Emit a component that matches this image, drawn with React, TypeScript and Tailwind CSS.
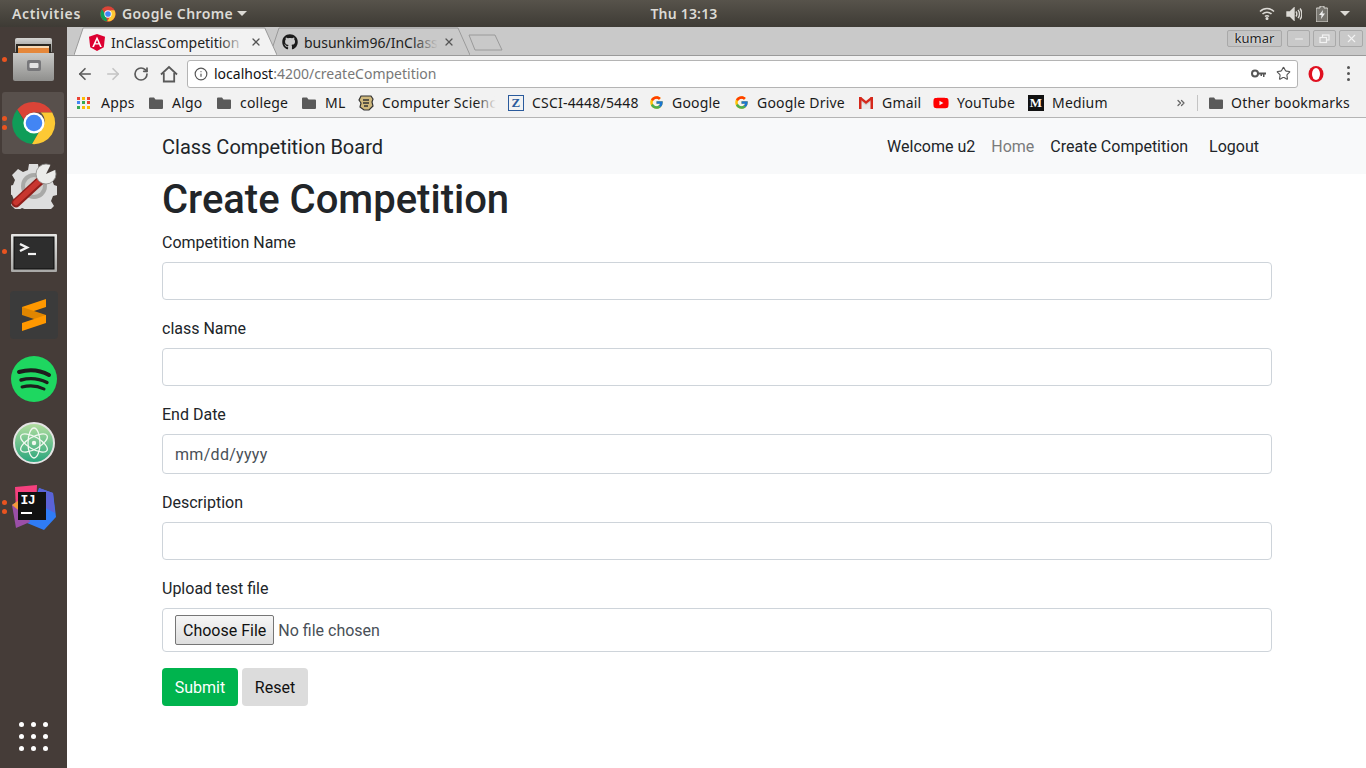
import { FaGithub, FaYoutube } from "react-icons/fa";
import { FcGoogle } from "react-icons/fc";
import { ArrowLeft, ArrowRight, RotateCw, Info, Star, X, Minus, ChevronsRight } from "lucide-react";

const uiFont = "font-['Noto_Sans','Open_Sans',sans-serif]";

function Folder() {
  return (
    <svg width="16" height="14" viewBox="0 0 16 14">
      <path d="M1 2.5a1 1 0 0 1 1-1h4l1.5 2H14a1 1 0 0 1 1 1V12a1 1 0 0 1-1 1H2a1 1 0 0 1-1-1z" fill="#5a5a5a" />
    </svg>
  );
}

function AppsGrid() {
  const colors = ["#ea4335", "#fbbc05", "#ea4335", "#4285f4", "#34a853", "#ea4335", "#34a853", "#fbbc05", "#fbbc05"];
  return (
    <div className="grid grid-cols-3 gap-[1.5px] w-[13px]">
      {colors.map((c, i) => (
        <span key={i} className="w-[3px] h-[3px]" style={{ backgroundColor: c }} />
      ))}
    </div>
  );
}

function CuIcon() {
  return (
    <svg width="16" height="16" viewBox="0 0 16 16">
      <path d="M3 1h10l2 3-1 3 1 4-4 4H6l-4-3 1-4-2-3z" fill="#cfb87c" stroke="#333" strokeWidth="1.2" />
      <path d="M5 5h6M5 8h6M6 11h4" stroke="#333" strokeWidth="1.4" />
    </svg>
  );
}

function GmailIcon() {
  return (
    <svg width="16" height="14" viewBox="0 0 16 14">
      <path d="M1 1v12h14V1l-7 5.5z" fill="#e8e8e8" />
      <path d="M1 1l7 5.5L15 1v3L8 9.5 1 4z" fill="#d0d0d0" />
      <path d="M1 1h2.5v12H1zM12.5 1H15v12h-2.5z" fill="#d5281b" />
      <path d="M1 1h2l5 4 5-4h2v1.5L8 8 1 2.5z" fill="#d5281b" />
    </svg>
  );
}

const bookmarks = [
  { label: "Apps", icon: <AppsGrid />, gap: "gap-[11px]", width: "w-[71px]" },
  { label: "Algo", icon: <Folder />, gap: "gap-[8px]", width: "w-[68px]" },
  { label: "college", icon: <Folder />, gap: "gap-[8px]", width: "w-[85px]" },
  { label: "ML", icon: <Folder />, gap: "gap-[8px]", width: "w-[57px]" },
];

const bookmarks2 = [
  {
    label: "CSCI-4448/5448",
    icon: (
      <span className="flex items-center justify-center w-[16px] h-[16px] border border-[#2a5a9c] text-[#2a5a9c] text-[13px] font-bold font-['Liberation_Serif',serif] leading-none">
        Z
      </span>
    ),
    width: "w-[140px]",
  },
  { label: "Google", icon: <FcGoogle size={15} />, width: "w-[85px]" },
  { label: "Google Drive", icon: <FcGoogle size={15} />, width: "w-[125px]" },
  { label: "Gmail", icon: <GmailIcon />, width: "w-[75px]" },
  { label: "YouTube", icon: <FaYoutube size={16} color="#f00" />, width: "w-[95px]" },
  {
    label: "Medium",
    icon: (
      <span className="flex items-center justify-center w-[16px] h-[16px] bg-[#111] text-white text-[13px] font-bold font-['Liberation_Serif',serif] leading-none">
        M
      </span>
    ),
    width: "w-[90px]",
  },
];

function FileDrawerIcon() {
  return (
    <svg width="41" height="43" viewBox="0 0 41 43">
      <defs>
        <linearGradient id="cab" x1="0" y1="0" x2="0" y2="1">
          <stop offset="0" stopColor="#c9c9c7" />
          <stop offset="1" stopColor="#8f8f8d" />
        </linearGradient>
        <linearGradient id="lid" x1="0" y1="0" x2="0" y2="1">
          <stop offset="0" stopColor="#d5d5d3" />
          <stop offset="1" stopColor="#8a8a88" />
        </linearGradient>
      </defs>
      <path d="M2 2a2 2 0 0 1 2-2h33a2 2 0 0 1 2 2v12H2z" fill="url(#lid)" />
      <rect x="3" y="6" width="35" height="9" fill="#2b2822" />
      <rect x="5" y="8" width="31" height="2" fill="#f6d9b4" />
      <rect x="5" y="10" width="31" height="5" fill="#e5873a" />
      <path d="M0 15h41v26a2 2 0 0 1-2 2H2a2 2 0 0 1-2-2z" fill="url(#cab)" />
      <rect x="14" y="22" width="14" height="11" rx="2" fill="#77777a" />
      <rect x="16.500" y="25" width="9" height="5" rx="1" fill="#e4e4e4" />
    </svg>
  );
}

function ChromeIcon() {
  return (
    <svg width="46" height="46" viewBox="0 0 48 48">
      <path d="M24 2a22 22 0 0 1 19.05 11H24a11 11 0 0 0-10.4 7.4L6.5 9.8A22 22 0 0 1 24 2z" fill="#db4437" />
      <path d="M6.5 9.8l9.6 16.6A9 9 0 0 0 29 33l-6.8 13A22 22 0 0 1 6.5 9.8z" fill="#0f9d58" />
      <path d="M43.05 13A22 22 0 0 1 22 46l9.5-16.4A11 11 0 0 0 31 13z" fill="#fcc934" />
      <circle cx="24" cy="24" r="11" fill="#fff" />
      <circle cx="24" cy="24" r="8.6" fill="#4285f4" />
    </svg>
  );
}

function SettingsIcon() {
  return (
    <svg width="46" height="46" viewBox="0 0 46 46">
      <path
        d="M18 1h9l1 6 5 2 5-3 6 6-3 5 2 5 3 1v9l-4 1-2 5 3 5-6 6-5-3-5 2-1 3h-9l-1-4-5-2-5 3-6-6 3-5-2-5-3-1v-8l4-1 2-5-3-5 6-6 5 3 5-2z"
        fill="#dedede"
      />
      <circle cx="23" cy="23" r="13" fill="#a9a9a7" />
      <circle cx="23" cy="23" r="9" fill="#cfcfcd" />
      <path d="M5 40L31 16" stroke="#8f1f1b" strokeWidth="9" strokeLinecap="round" />
      <path d="M5 39.500L30 16.500" stroke="#c8362f" strokeWidth="5.500" strokeLinecap="round" />
      <circle cx="35" cy="11" r="10" fill="#ececea" stroke="#8a8a88" strokeWidth="0.800" />
      <path d="M35 11L41 -1L48 5z" fill="#453c38" />
    </svg>
  );
}

function TerminalIcon() {
  return (
    <svg width="46" height="38" viewBox="0 0 46 38">
      <defs>
        <linearGradient id="term" x1="0" y1="0" x2="0" y2="1">
          <stop offset="0" stopColor="#e6e6e4" />
          <stop offset="1" stopColor="#a8a8a6" />
        </linearGradient>
      </defs>
      <rect x="0" y="0" width="46" height="38" rx="1" fill="url(#term)" />
      <rect x="3" y="3" width="40" height="32" fill="#2d2d2d" stroke="#0c0c0c" />
      <path d="M9 10l7 3.500-7 3.500" stroke="#f2f2f2" strokeWidth="2.500" fill="none" />
      <path d="M17 20h8" stroke="#f2f2f2" strokeWidth="2.200" />
    </svg>
  );
}

function SublimeIcon() {
  return (
    <div className="w-[48px] h-[48px] rounded-[4px] bg-[#3b3b3b] flex items-center justify-center">
      <svg width="26" height="32" viewBox="0 0 26 32">
        <path d="M25 0v8L1 16V8z" fill="#ff9800" />
        <path d="M1 8l24 8v8L1 16z" fill="#e08600" />
        <path d="M25 16v8L1 32v-8z" fill="#ff9800" />
      </svg>
    </div>
  );
}

function SpotifyIcon() {
  return (
    <svg width="46" height="46" viewBox="0 0 46 46">
      <circle cx="23" cy="23" r="23" fill="#1ed760" />
      <path d="M8 16c10-3 21-2 30 3" stroke="#1d1d1d" strokeWidth="4" strokeLinecap="round" fill="none" />
      <path d="M10 24c9-2.5 18-1.500 26 2.500" stroke="#1d1d1d" strokeWidth="3.400" strokeLinecap="round" fill="none" />
      <path d="M11 31c8-2 15-1.500 22 2" stroke="#1d1d1d" strokeWidth="3" strokeLinecap="round" fill="none" />
    </svg>
  );
}

function AtomIcon() {
  return (
    <svg width="42" height="42" viewBox="0 0 42 42">
      <defs>
        <linearGradient id="atom" x1="0" y1="0" x2="0" y2="1">
          <stop offset="0" stopColor="#b5dfa0" />
          <stop offset="1" stopColor="#27a57c" />
        </linearGradient>
      </defs>
      <circle cx="21" cy="21" r="20" fill="url(#atom)" stroke="#e4e4e4" strokeWidth="2" />
      <g fill="none" stroke="#f1f8f0" strokeWidth="1.300">
        <ellipse cx="21" cy="21" rx="15" ry="6" transform="rotate(30 21 21)" />
        <ellipse cx="21" cy="21" rx="15" ry="6" transform="rotate(-30 21 21)" />
        <ellipse cx="21" cy="21" rx="15" ry="6" transform="rotate(90 21 21)" />
      </g>
      <circle cx="21" cy="21" r="2.200" fill="#f1f8f0" />
    </svg>
  );
}

function IntellijIcon() {
  return (
    <div className="relative w-[44px] h-[46px]">
      <svg width="44" height="46" viewBox="0 0 44 46" className="absolute inset-0">
        <path d="M27 4l14 5 3 24-12 13-17-7z" fill="#2f7cf6" />
        <path d="M27 4l14 5 2 20-17-9z" fill="#5b62d6" />
        <path d="M3 3l22-2-1 22-20 4z" fill="#f5407e" />
        <path d="M0 21l10-7 8 24-14 6z" fill="#9b4fa8" />
        <path d="M0 21l7-5 3 13z" fill="#f39a3a" />
      </svg>
      <div className="absolute left-[6px] top-[8px] w-[28px] h-[28px] bg-[#111] px-[3px] pt-[1px]">
        <div className="text-white text-[13px] leading-[15px] font-bold font-['Liberation_Mono',monospace] tracking-[-0.5px]">IJ</div>
        <div className="w-[11px] h-[2px] bg-white mt-[4px]" />
      </div>
    </div>
  );
}

const dockItems = [
  { icon: <FileDrawerIcon />, dots: 1, offset: "" },
  { icon: <ChromeIcon />, dots: 2, active: true, offset: "" },
  { icon: <SettingsIcon />, dots: 0, offset: "-mt-[3px]" },
  { icon: <TerminalIcon />, dots: 1, offset: "mt-[4px]" },
  { icon: <SublimeIcon />, dots: 0, offset: "" },
  { icon: <SpotifyIcon />, dots: 0, offset: "" },
  { icon: <AtomIcon />, dots: 0, offset: "" },
  { icon: <IntellijIcon />, dots: 2, offset: "" },
];

function Dock() {
  return (
    <aside className="w-[67px] shrink-0 bg-[#453c38] flex flex-col items-center pb-[17px]">
      {dockItems.map((item, i) => (
        <div key={i} className="relative w-[67px] h-[64px] flex items-center justify-center">
          {item.active && <div className="absolute left-[2px] top-[1px] w-[62px] h-[62px] rounded-[3px] bg-white/10" />}
          <div className={`relative ${item.offset}`}>{item.icon}</div>
          {item.dots > 0 && (
            <div className="absolute left-[2px] top-0 bottom-0 flex flex-col justify-center gap-[4px]">
              {Array.from({ length: item.dots }).map((_, d) => (
                <span key={d} className="block w-[5px] h-[5px] rounded-full bg-[#e95420]" />
              ))}
            </div>
          )}
        </div>
      ))}
      <div className="mt-auto grid grid-cols-3 gap-x-[7px] gap-y-[7px]">
        {Array.from({ length: 9 }).map((_, i) => (
          <span key={i} className="w-[5px] h-[5px] rounded-full bg-white" />
        ))}
      </div>
    </aside>
  );
}

function TopBar() {
  return (
    <header className={`h-[27px] shrink-0 bg-gradient-to-b from-[#57534b] to-[#3e3b35] flex items-center text-[#dcdad5] text-[14px] font-semibold ${uiFont}`}>
      <div className="w-[100px] pl-[12px] tracking-[0.65px]">Activities</div>
      <div className="flex items-center gap-[6px] w-[520px] tracking-[0.4px]">
        <svg width="16" height="16" viewBox="0 0 48 48">
          <circle cx="24" cy="24" r="23" fill="#db4437" />
          <path d="M6.500 9.800l9.600 16.600L22 46A22 22 0 0 1 6.500 9.800z" fill="#0f9d58" />
          <path d="M43 13A22 22 0 0 1 22 46l9.500-16.400L31 13z" fill="#fcc934" />
          <circle cx="24" cy="24" r="11" fill="#fff" />
          <circle cx="24" cy="24" r="8.500" fill="#4285f4" />
        </svg>
        <span>Google Chrome</span>
        <span className="-ml-[2px] w-0 h-0 border-x-[5px] border-x-transparent border-t-[5px] border-t-[#dcdad5]" />
      </div>
      <div className="w-[130px] -ml-[1px] text-center tracking-[0.2px]">Thu 13:13</div>
      <div className="ml-auto flex items-center gap-[12px] pr-[16px]">
        <svg width="16" height="13" viewBox="0 0 16 13" fill="none" stroke="#dcdad5" strokeWidth="1.500">
          <path d="M1 4.500c4-4 10-4 14 0M3.500 7c2.500-2.500 6.500-2.500 9 0M6 9.500c1-1 3-1 4 0" />
          <circle cx="8" cy="11.500" r="0.800" fill="#dcdad5" />
        </svg>
        <svg width="16" height="14" viewBox="0 0 16 14" fill="none" stroke="#dcdad5" strokeWidth="1.400" className="ml-[-1px]">
          <path d="M1 5h3l4-4v12l-4-4H1z" fill="#dcdad5" />
          <path d="M10 4.500c1 1.500 1 3.500 0 5M12 3c2 2 2 6 0 8M14 1.500c2.500 3 2.500 8 0 11" />
        </svg>
        <svg width="12" height="16" viewBox="0 0 12 16" className="ml-[2px]">
          <path d="M4 0h4v2h3a1 1 0 0 1 1 1v12a1 1 0 0 1-1 1H1a1 1 0 0 1-1-1V3a1 1 0 0 1 1-1h3z" fill="#77756f" stroke="#dcdad5" />
          <path d="M7 4L3 9h2.500L5 13l4-5.500H6.500z" fill="#eee" />
        </svg>
        <span className="w-0 h-0 border-x-[5px] border-x-transparent border-t-[5px] border-t-[#dcdad5]" />
      </div>
    </header>
  );
}

function Tab({ label, icon, active, width, pad }: { label: string; icon: React.ReactNode; active?: boolean; width: string; pad: string }) {
  return (
    <div className={`relative h-full ${width} -mr-[7px] ${active ? "z-10" : ""}`}>
      <svg className="absolute inset-0 w-full h-full" viewBox="0 0 200 28" preserveAspectRatio="none">
        <path
          d="M0 28 L9 1 H188 L200 28"
          fill={active ? "#f2f2f2" : "#c9c9c9"}
          stroke="#9a9a9a"
          strokeWidth="1"
          vectorEffect="non-scaling-stroke"
        />
      </svg>
      <div className={`relative flex items-center h-full ${pad} pr-[15px] pt-[2px] text-[14px] text-[#222] ${uiFont}`}>
        <span className="w-[16px] shrink-0 flex justify-center">{icon}</span>
        <div className="relative ml-[6px] flex-1 overflow-hidden whitespace-nowrap">
          {label}
          <span className={`absolute right-0 top-0 bottom-0 w-[26px] bg-gradient-to-r from-transparent ${active ? "to-[#f2f2f2]" : "to-[#c9c9c9]"}`} />
        </div>
        <X size={12} strokeWidth={2.5} className="ml-[5px] shrink-0 text-[#555]" />
      </div>
    </div>
  );
}

function TabStrip() {
  return (
    <div className="h-[29px] shrink-0 bg-[#c9c9c9] border-b border-[#9a9a9a] flex items-end pl-[7px] relative">
      <div className="flex h-[28px]">
        <Tab
          active
          width="w-[203px]"
          pad="pl-[15px]"
          label="InClassCompetition"
          icon={
            <svg width="16" height="17" viewBox="0 0 16 17">
              <path d="M8 0l8 2.800-1.200 10.400L8 17l-6.800-3.800L0 2.800z" fill="#dd0031" />
              <path d="M8 2.500L3.200 13h1.800l1-2.400h4l1 2.400h1.800zM8 6l1.400 3.200H6.600z" fill="#fff" />
            </svg>
          }
        />
        <Tab width="w-[200px]" pad="pl-[12px]" label="busunkim96/InClass" icon={<FaGithub size={16} color="#1b1b1b" />} />
      </div>
      <svg width="35" height="17" viewBox="0 0 35 17" className="ml-[5px] mb-[4px]">
        <path d="M1 1H27L34 16H7z" fill="#c9c9c9" stroke="#9a9a9a" />
      </svg>
      <div className="ml-auto mr-[3px] mb-[8px] self-end flex items-center text-[#444]">
        <div className={`w-[55px] h-[17px] bg-[#c4c4c4] border border-[#a9a9a9] rounded-[2px] flex items-center justify-center text-[13px] text-[#222] [text-shadow:0_0_2px_#fff] ${uiFont}`}>
          kumar
        </div>
        <div className="ml-[5px] w-[23px] h-[17px] border border-[#a9a9a9] rounded-[2px] flex items-center justify-center text-[#f2f2f2]">
          <Minus size={12} strokeWidth={2} />
        </div>
        <div className="ml-[3px] w-[23px] h-[17px] border border-[#a9a9a9] rounded-[2px] flex items-center justify-center">
          <svg width="11" height="10" viewBox="0 0 11 10" fill="none" stroke="#f2f2f2" strokeWidth="1.200">
            <rect x="3.500" y="1" width="6.500" height="5" />
            <rect x="1" y="3.500" width="6.500" height="5" fill="#c9c9c9" />
          </svg>
        </div>
        <div className="ml-[3px] w-[24px] h-[17px] border border-[#a9a9a9] rounded-[2px] flex items-center justify-center text-[#f2f2f2]">
          <X size={13} strokeWidth={2} />
        </div>
      </div>
    </div>
  );
}

function Toolbar() {
  return (
    <div className="h-[32px] shrink-0 bg-[#f2f2f2] flex items-center pl-[9px] pr-[16px] pt-[3px]">
      <ArrowLeft size={18} strokeWidth={2.200} className="text-[#5a5a5a]" />
      <ArrowRight size={18} strokeWidth={2.200} className="ml-[10px] text-[#c4c4c4]" />
      <RotateCw size={16} strokeWidth={2.500} className="ml-[11px] text-[#5a5a5a]" />
      <svg width="18" height="18" viewBox="0 0 18 18" fill="none" stroke="#5a5a5a" strokeWidth="1.800" className="ml-[11px]">
        <path d="M1 9.500L9 2l8 7.500" />
        <path d="M3.800 8v8.500h10.400V8" />
      </svg>
      <div className={`ml-[9px] flex-1 h-[28px] bg-white border border-[#b4b4b4] rounded-[3px] flex items-center pl-[6px] pr-[6px] text-[14px] ${uiFont}`}>
        <Info size={14} strokeWidth={2} className="text-[#555]" />
        <span className="ml-[6px] text-[#111]">localhost</span>
        <span className="text-[#787878]">:4200/createCompetition</span>
        <svg width="15" height="9" viewBox="0 0 15 9" className="ml-auto">
          <circle cx="4" cy="4.500" r="3" fill="none" stroke="#555" strokeWidth="2" />
          <path d="M7 3.500h8v2h-1.500v2.500H12V5.500h-1v1.500H9.500V5.500H7z" fill="#555" />
        </svg>
        <Star size={15} strokeWidth={1.800} className="ml-[10px] text-[#555]" />
      </div>
      <svg width="18" height="18" viewBox="0 0 18 18" className="ml-[9px]">
        <ellipse cx="9" cy="9" rx="7.500" ry="8" fill="#e01020" />
        <ellipse cx="9" cy="9" rx="4" ry="6" fill="#fff" />
      </svg>
      <div className="ml-[22px] flex flex-col gap-[3px]">
        <span className="w-[3px] h-[3px] rounded-full bg-[#555]" />
        <span className="w-[3px] h-[3px] rounded-full bg-[#555]" />
        <span className="w-[3px] h-[3px] rounded-full bg-[#555]" />
      </div>
    </div>
  );
}

function BookmarkBar() {
  return (
    <div className={`h-[30px] shrink-0 bg-[#f2f2f2] border-b border-[#b4b4b4] flex items-center pl-[10px] text-[14px] tracking-[0.2px] text-[#1a1a1a] ${uiFont}`}>
      {bookmarks.map((b) => (
        <div key={b.label} className={`flex items-center ${b.gap} ${b.width}`}>
          {b.icon}
          <span>{b.label}</span>
        </div>
      ))}
      <div className="flex items-center gap-[8px] w-[150px]">
        <CuIcon />
        <div className="relative w-[114px] overflow-hidden whitespace-nowrap">
          Computer Science
          <span className="absolute right-0 top-0 bottom-0 w-[20px] bg-gradient-to-r from-transparent to-[#f2f2f2]" />
        </div>
      </div>
      {bookmarks2.map((b) => (
        <div key={b.label} className={`flex items-center gap-[8px] ${b.width}`}>
          <span className="w-[16px] flex justify-center shrink-0">{b.icon}</span>
          <span className="whitespace-nowrap">{b.label}</span>
        </div>
      ))}
      <ChevronsRight size={12} strokeWidth={2.5} className="ml-[57px] text-[#666]" />
      <div className="ml-[10px] w-px h-[16px] bg-[#c4c4c4]" />
      <div className="ml-[10px] flex items-center gap-[7px]">
        <Folder />
        <span className="whitespace-nowrap">Other bookmarks</span>
      </div>
    </div>
  );
}

function Field({ label, className, children, last }: { label: string; className: string; children?: React.ReactNode; last?: boolean }) {
  return (
    <div className={last ? "mb-[16px]" : "mb-[17px]"}>
      <div className="h-[24px] mb-[7px] leading-[24px] text-[16px] text-[#212529]">{label}</div>
      <div className={`bg-white border border-[#ced4da] rounded-[4px] flex items-center ${className}`}>{children}</div>
    </div>
  );
}

function Page() {
  return (
    <main className="flex-1 bg-white font-['Roboto',sans-serif]">
      <nav className="h-[56px] bg-[#f8f9fa] pl-[95px] pr-[107px] pt-[2px] flex items-center text-[16px]">
        <span className="text-[20px] text-[#212529]">Class Competition Board</span>
        <div className="ml-auto flex items-center text-[#212529]">
          <span>Welcome u2</span>
          <span className="ml-[16px] text-[#7a7b7c]">Home</span>
          <span className="ml-[16px]">Create Competition</span>
          <span className="ml-[21px]">Logout</span>
        </div>
      </nav>
      <div className="ml-[95px] w-[1110px]">
        <h1 className="text-[40px] leading-[48px] font-medium text-[#212529] mt-[2px] mb-[7px]">Create Competition</h1>
        <Field label="Competition Name" className="h-[38px]" />
        <Field label="class Name" className="h-[38px]" />
        <Field label="End Date" className="h-[40px] pl-[12px] pt-[1px] text-[#495057] tracking-[0.3px]">
          mm/dd/yyyy
        </Field>
        <Field label="Description" className="h-[38px]" />
        <Field last label="Upload test file" className="h-[44px] pl-[12px] text-[#495057]">
          <span className="h-[30px] px-[7px] pt-[1px] flex items-center text-[#111] bg-gradient-to-b from-[#f6f6f6] to-[#dedede] border border-[#767676] rounded-[2px]">
            Choose File
          </span>
          <span className="ml-[4px] pt-[1px]">No file chosen</span>
        </Field>
        <div className="flex gap-[4px] text-[16px]">
          <span className="h-[38px] w-[76px] pt-[1px] flex items-center justify-center rounded-[4px] bg-[#00b44e] text-white">Submit</span>
          <span className="h-[38px] w-[66px] pt-[1px] flex items-center justify-center rounded-[4px] bg-[#dcdcdc] text-[#111]">Reset</span>
        </div>
      </div>
    </main>
  );
}

export default function App() {
  return (
    <div className="w-[1366px] h-[768px] overflow-hidden flex flex-col">
      <TopBar />
      <div className="flex-1 flex min-h-0">
        <Dock />
        <div className="flex-1 flex flex-col min-w-0">
          <TabStrip />
          <Toolbar />
          <BookmarkBar />
          <Page />
        </div>
      </div>
    </div>
  );
}
